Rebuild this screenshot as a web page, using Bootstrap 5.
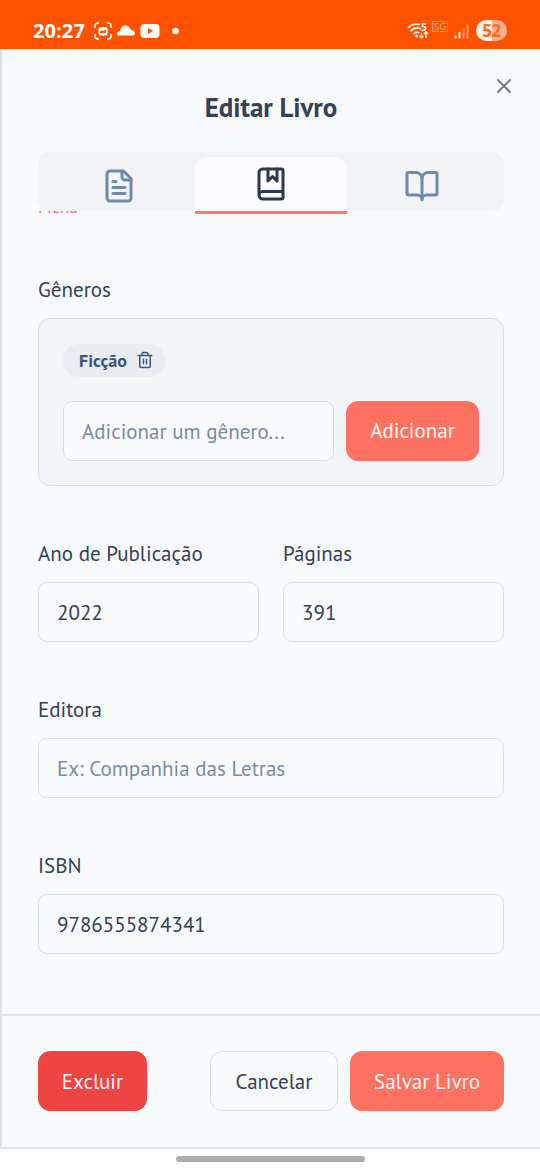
<!DOCTYPE html>
<html lang="pt-BR">
<head>
<meta charset="utf-8">
<meta name="viewport" content="width=device-width, initial-scale=1">
<title>Editar Livro</title>
<link href="https://cdn.jsdelivr.net/npm/bootstrap@5.3.0/dist/css/bootstrap.min.css" rel="stylesheet">
<style>
body{font-family:"PT Sans","Noto Sans","Open Sans",sans-serif;font-size:21px;color:#334155;background:#fff;height:1170px;overflow:hidden;--bs-body-line-height:1.5}
svg{display:block;flex:none}
.status{height:49px;background:#ff5200;color:#fff;padding:13px 33px 0 33px;font-family:"Open Sans",sans-serif}
.clock{font-size:20px;font-weight:700;width:60px;line-height:36px;letter-spacing:.1px}
.battery{width:31px;height:21px;border-radius:11px;background:linear-gradient(90deg,#fff0e5 51%,#ffb28c 51%);color:#ff6a22;font-size:17px;font-weight:700;line-height:21px;letter-spacing:-.5px;text-align:center;margin:7px 0 0 7px}
.sheet{height:1100px;background:#f9fafc;border-left:2px solid #dfe1e4;border-top:1px solid #f9fafc;border-bottom:2px solid #e1e3e6}
.sheet-head{height:102px}
.sheet-head h1{font-size:27px;font-weight:700;line-height:36px;padding-top:39px;letter-spacing:-.05px}
.dismiss{right:27px;top:27px;color:#6b7280}
.tabs{margin:0 36px;height:59px;background:#f2f3f4;border-radius:12px;position:relative;z-index:1;display:grid;grid-template-columns:1fr 1fr 1fr;padding:5px 6px 0;color:#718aaa}
.tabs .nav-link{padding:3px 0 0;height:54px;display:flex;justify-content:center;align-items:center;color:inherit}
.tabs .nav-link.active{background:#fbfbfd;color:#2b3a50;border-bottom:3px solid #f77b6f;border-radius:12px 12px 0 0;height:57px;padding:0}
.tabs .nav-link:first-child{padding-right:1px}
.tabs .nav-link:last-child{padding-top:3px}
.pane{height:805px;overflow:hidden;padding:0 36px;border-bottom:2px solid #e1e3e6}
.note{height:20px;line-height:20px;font-size:17.5px;color:#f4685c;margin-top:-14px;margin-bottom:57px}
.form-label{display:block;line-height:32px;height:30px;margin:0 0 14px;font-size:21px}
.form-control,.form-control:focus{height:60px;border:1.5px solid #d9dce1;border-radius:9px;background:#f9fafc;color:#334155;font-size:21px;padding:1px 18px 0}
.form-control::placeholder{color:#7b8ba4;opacity:1}
.genres{height:168px;border:1.5px solid #d9dce1;border-radius:12px;background:#f3f4f6;padding:25px 24px 0}
.chip{height:33px;width:102px;border-radius:17px;background:#e9ecf0;color:#3a5682;font-size:18px;font-weight:700;line-height:31px;padding-left:16px;padding-bottom:1px;gap:9px;margin-bottom:24px}
.btn{height:60px;border-radius:12px;font-size:21px;padding:0;border-width:1.5px;flex:none}
.coral,.coral:hover{background:#ff7262;border-color:#ff7262;color:#fff6f2}
.crimson,.crimson:hover{background:#ef4444;border-color:#ef4444;color:#fff4f2}
.quiet,.quiet:hover{background:#f9fafc;border-color:#d9dce1;color:#334155}
.field{margin-top:52px}
.actions{padding:35px 36px 0;gap:12px}
.actions .btn{padding-top:1px}
.home-bar{width:189px;height:6px;border-radius:3px;background:#acacac;margin:7px auto 0 175.5px}
</style>
</head>
<body>
<header class="status d-flex align-items-start">
  <span class="clock">20:27</span>
  <svg width="90" height="20" viewBox="0 0 90 20" fill="none" class="mt-2">
    <path d="M2 7V5q0-3 3-3h1M14 2h1q3 0 3 3v2M18 13v2q0 3-3 3h-1M6 18H5q-3 0-3-3v-2" stroke="#fff" stroke-width="1.7"/>
    <rect x="5.5" y="6" width="9" height="8.5" rx="2" fill="#fff"/><path d="M7 12v-1.500l2-1.300 1.500 1L13 8v4z" fill="#ff5200"/>
    <path d="M26.500 14.500c-3.500 0-3-4 .5-4.300C28 6 29.800 4.500 32.500 4.500c2.800 0 4.500 2 5 4.200 3 .3 4.500 1.800 4.500 3.500 0 1.800-1.500 2.300-3 2.300z" fill="#fff"/>
    <rect x="47.500" y="3" width="19" height="14" rx="4" fill="#fff"/><path d="M55 7v6l5-3z" fill="#ff5200"/>
    <circle cx="82.500" cy="10" r="3.300" fill="#fff"/>
  </svg>
  <svg class="ms-auto" width="62" height="32" viewBox="0 0 62 32" fill="none">
    <g stroke="#fff0e5" stroke-width="1.800">
      <path d="M1 15c3-3.500 8-4.800 12-3.300M3.500 18c3-3 7-3.800 10.500-2M6.500 21c1.500-1.800 4-2.200 6-1.200"/>
      <path d="M14.500 20v5m-2-2 2 2 2-2M19 25v-6m-2 2 2-2 2 2" stroke-width="1.500"/>
    </g>
    <circle cx="9.500" cy="23" r="1.500" fill="#fff0e5"/>
    <text x="14" y="18" font-size="10" font-weight="700" fill="#fff0e5">5</text>
    <rect x="25.500" y="8.500" width="15" height="10" stroke="#ff915e"/>
    <text x="27" y="17" font-size="9.500" fill="#ffb28c">5G</text>
    <g fill="#fff0e5"><path d="M47.500 22.500h2v3h-2zM51.500 19h2v6.500h-2z"/><path opacity=".42" d="M55.500 15h2v10.500h-2zM59.500 11.500h2v14h-2z"/></g>
  </svg>
  <span class="battery">52</span>
</header>

<main class="sheet position-relative">
  <div class="sheet-head text-center">
    <h1 class="m-0">Editar Livro</h1>
    <svg class="dismiss position-absolute" width="18" height="18" viewBox="0 0 18 18" stroke="currentColor" stroke-width="1.800" stroke-linecap="round"><path d="m3 3 12 12M15 3 3 15"/></svg>
  </div>
  <nav class="tabs">
    <a class="nav-link"><svg width="36" height="36" viewBox="0 0 24 24" fill="none" stroke="currentColor" stroke-width="2" stroke-linecap="round" stroke-linejoin="round"><path d="M15 2H6a2 2 0 0 0-2 2v16a2 2 0 0 0 2 2h12a2 2 0 0 0 2-2V7Z"/><path d="M14 2v4a2 2 0 0 0 2 2h4M10 9H8M16 13H8M16 17H8"/></svg></a>
    <a class="nav-link active"><svg width="36" height="36" viewBox="0 0 24 24" fill="none" stroke="currentColor" stroke-width="2" stroke-linecap="round" stroke-linejoin="round"><path d="M10 2v8l3-3 3 3V2"/><path d="M4 19.500v-15A2.500 2.500 0 0 1 6.500 2H19a1 1 0 0 1 1 1v18a1 1 0 0 1-1 1H6.500a1 1 0 0 1 0-5H20"/></svg></a>
    <a class="nav-link"><svg width="36" height="36" viewBox="0 0 24 24" fill="none" stroke="currentColor" stroke-width="2" stroke-linecap="round" stroke-linejoin="round"><path d="M12 7v14"/><path d="M3 18a1 1 0 0 1-1-1V4a1 1 0 0 1 1-1h5a4 4 0 0 1 4 4 4 4 0 0 1 4-4h5a1 1 0 0 1 1 1v13a1 1 0 0 1-1 1h-6a3 3 0 0 0-3 3 3 3 0 0 0-3-3z"/></svg></a>
  </nav>
  <section class="pane">
    <div class="note">Ficha</div>
    <label class="form-label">Gêneros</label>
    <div class="genres">
      <div class="chip d-flex align-items-center"><span>Ficção</span><svg width="18" height="18" viewBox="0 0 24 24" fill="none" stroke="currentColor" stroke-width="2" stroke-linecap="round" stroke-linejoin="round"><path d="M3 6h18M19 6v14a2 2 0 0 1-2 2H7a2 2 0 0 1-2-2V6M8 6V4a2 2 0 0 1 2-2h4a2 2 0 0 1 2 2v2M10 11v6M14 11v6"/></svg></div>
      <div class="d-flex" style="gap:12px"><input class="form-control" placeholder="Adicionar um gênero..."><button class="btn coral" style="width:133px">Adicionar</button></div>
    </div>
    <div class="d-flex field" style="gap:24px">
      <div class="flex-fill"><label class="form-label">Ano de Publicação</label><input class="form-control" value="2022"></div>
      <div class="flex-fill"><label class="form-label">Páginas</label><input class="form-control" value="391"></div>
    </div>
    <div class="field"><label class="form-label">Editora</label><input class="form-control" placeholder="Ex: Companhia das Letras"></div>
    <div class="field"><label class="form-label">ISBN</label><input class="form-control" value="9786555874341"></div>
  </section>
  <footer class="actions d-flex">
    <button class="btn crimson me-auto" style="width:109px">Excluir</button>
    <button class="btn quiet" style="width:128px">Cancelar</button>
    <button class="btn coral" style="width:154px">Salvar Livro</button>
  </footer>
</main>
<div class="home-bar"></div>
<script src="https://cdn.jsdelivr.net/npm/bootstrap@5.3.0/dist/js/bootstrap.bundle.min.js"></script>
</body>
</html>
